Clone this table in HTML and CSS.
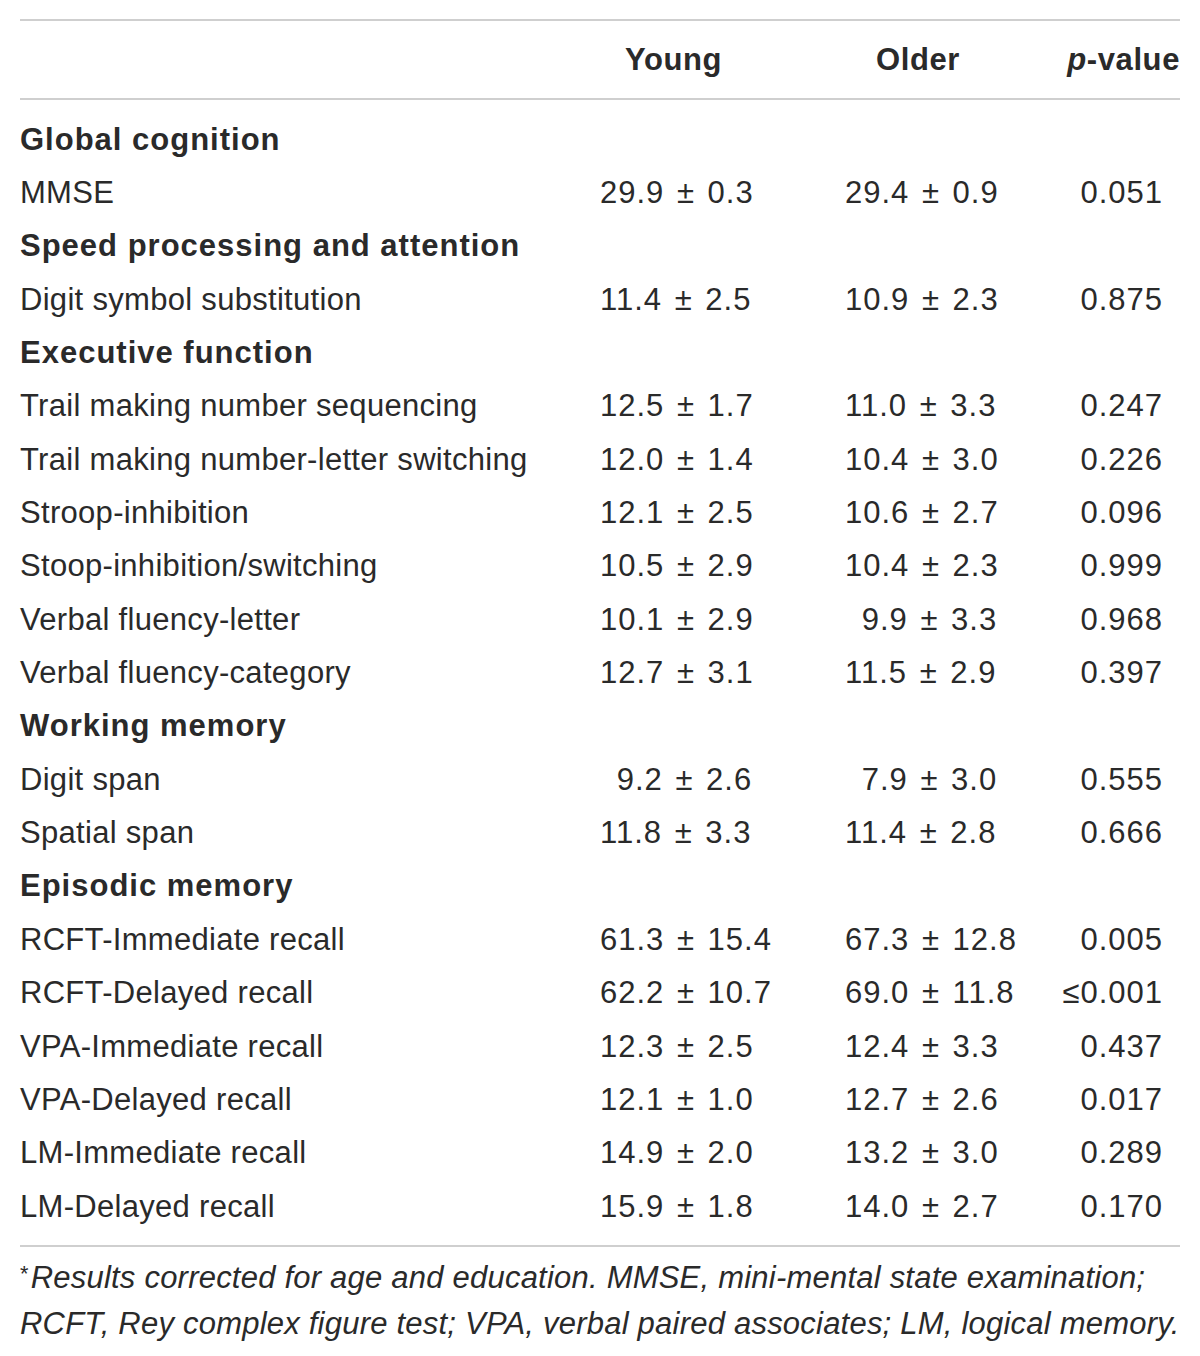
FILE: index.html
```html
<!DOCTYPE html>
<html lang="en">
<head>
  <meta charset="UTF-8" />
  <title>Neuropsychological scores</title>
  <link rel="stylesheet" href="styles.css">
</head>
<body>
  <div class="sheet">
    <div class="row head">
      <div></div>
      <div class="young-h">Young</div>
      <div class="older-h">Older</div>
      <div class="p"><i>p</i>-value</div>
    </div>

    <div class="body">
      <div class="row"><div class="group">Global cognition</div></div>
      <div class="row"><div>MMSE</div><div>29.9 ± 0.3</div><div>29.4 ± 0.9</div><div class="p">0.051</div></div>

      <div class="row"><div class="group">Speed processing and attention</div></div>
      <div class="row"><div>Digit symbol substitution</div><div>11.4 ± 2.5</div><div>10.9 ± 2.3</div><div class="p">0.875</div></div>

      <div class="row"><div class="group">Executive function</div></div>
      <div class="row"><div>Trail making number sequencing</div><div>12.5 ± 1.7</div><div>11.0 ± 3.3</div><div class="p">0.247</div></div>
      <div class="row"><div>Trail making number-letter switching</div><div>12.0 ± 1.4</div><div>10.4 ± 3.0</div><div class="p">0.226</div></div>
      <div class="row"><div>Stroop-inhibition</div><div>12.1 ± 2.5</div><div>10.6 ± 2.7</div><div class="p">0.096</div></div>
      <div class="row"><div>Stoop-inhibition/switching</div><div>10.5 ± 2.9</div><div>10.4 ± 2.3</div><div class="p">0.999</div></div>
      <div class="row"><div>Verbal fluency-letter</div><div>10.1 ± 2.9</div><div class="pad">9.9 ± 3.3</div><div class="p">0.968</div></div>
      <div class="row"><div>Verbal fluency-category</div><div>12.7 ± 3.1</div><div>11.5 ± 2.9</div><div class="p">0.397</div></div>

      <div class="row"><div class="group">Working memory</div></div>
      <div class="row"><div>Digit span</div><div class="pad">9.2 ± 2.6</div><div class="pad">7.9 ± 3.0</div><div class="p">0.555</div></div>
      <div class="row"><div>Spatial span</div><div>11.8 ± 3.3</div><div>11.4 ± 2.8</div><div class="p">0.666</div></div>

      <div class="row"><div class="group">Episodic memory</div></div>
      <div class="row"><div>RCFT-Immediate recall</div><div>61.3 ± 15.4</div><div>67.3 ± 12.8</div><div class="p">0.005</div></div>
      <div class="row"><div>RCFT-Delayed recall</div><div>62.2 ± 10.7</div><div>69.0 ± 11.8</div><div class="p">≤0.001</div></div>
      <div class="row"><div>VPA-Immediate recall</div><div>12.3 ± 2.5</div><div>12.4 ± 3.3</div><div class="p">0.437</div></div>
      <div class="row"><div>VPA-Delayed recall</div><div>12.1 ± 1.0</div><div>12.7 ± 2.6</div><div class="p">0.017</div></div>
      <div class="row"><div>LM-Immediate recall</div><div>14.9 ± 2.0</div><div>13.2 ± 3.0</div><div class="p">0.289</div></div>
      <div class="row"><div>LM-Delayed recall</div><div>15.9 ± 1.8</div><div>14.0 ± 2.7</div><div class="p">0.170</div></div>
    </div>

    <p class="note"><span class="star">*</span>Results corrected for age and education. MMSE, mini-mental state examination;<br>RCFT, Rey complex figure test; VPA, verbal paired associates; LM, logical memory.</p>
  </div>
</body>
</html>
```

FILE: styles.css
```css
body {
  margin: 0;
  background: #fff;
  font-family: "Liberation Sans", Arial, sans-serif;
  color: #2a2a2a;
}

.sheet {
  margin: 19px 20px 0 20px;
  border-top: 2px solid #cfcfcf;
}

.row {
  display: grid;
  grid-template-columns: 580px 245px 200px 1fr;
  height: 53.35px;
  align-items: center;
  font-size: 31px;
  letter-spacing: 0.3px;
  white-space: nowrap;
}

/* number columns are set a little looser */
.row > div + div {
  letter-spacing: 1px;
  word-spacing: 3px;
}

.row .p {
  text-align: right;
  padding-right: 17px;
}

.head {
  height: 77px;
  font-weight: bold;
  border-bottom: 2px solid #cfcfcf;
}
.head > div + div {
  letter-spacing: 0.6px;
}
.head .young-h { padding-left: 25px; }
.head .older-h { padding-left: 31px; }
.head .p { padding-right: 0; }

.body {
  padding: 13px 0 12px;
  border-bottom: 2px solid #cfcfcf;
}

.group {
  font-weight: bold;
  letter-spacing: 1px;
}

.pad {
  padding-left: 0.54em;
}

.note {
  margin: 9px 0 0;
  font-size: 31px;
  font-style: italic;
  letter-spacing: 0.22px;
  line-height: 43px;
  white-space: nowrap;
}
.note .star {
  font-style: normal;
  font-size: 0.7em;
  position: relative;
  top: -0.35em;
  margin-right: 2px;
}
```
